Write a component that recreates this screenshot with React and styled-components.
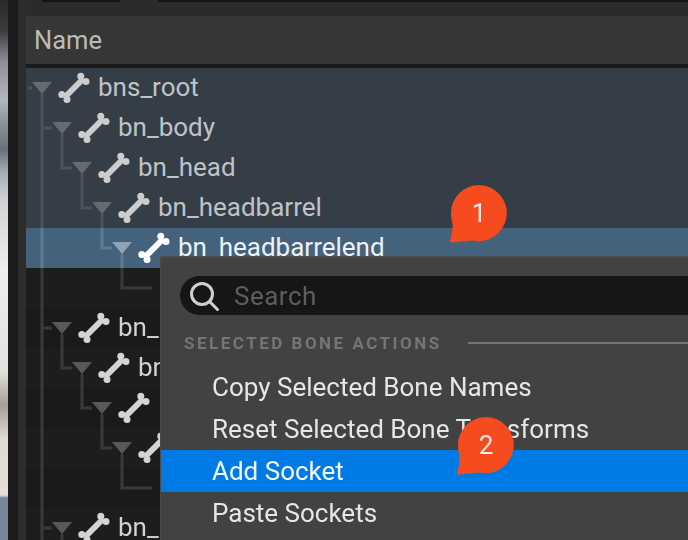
import React from 'react';
import styled, { createGlobalStyle } from 'styled-components';

const Global = createGlobalStyle`
  html, body { margin: 0; padding: 0; background: #1c1c1c; }
  body { width: 688px; height: 540px; overflow: hidden; font-family: Roboto, "Liberation Sans", sans-serif; }
`;

const Screen = styled.div`
  position: relative;
  display: flex;
  width: 688px;
  height: 540px;
  overflow: hidden;
  filter: blur(0.55px);
`;

const Backdrop = styled.div`
  flex: 0 0 8px;
  background: linear-gradient(
    to bottom,
    #2a2a2a 0, #3a3b3d 30px, #8d9097 62px, #b3b6bd 100px, #8a9097 125px, #66717a 150px,
    #a6adb4 172px, #d0d3d6 200px, #eeeeec 270px, #e4e2df 370px, #a89f96 405px, #dfdcd6 440px,
    #e3dfd8 495px, #77869b 498px, #77869b 540px
  );
`;

const Gutter = styled.div`
  flex: 0 0 ${(p) => p.$w}px;
  background: ${(p) => p.$bg};
`;

const Panel = styled.div`
  flex: 1;
  min-width: 0;
  display: flex;
  flex-direction: column;
  position: relative;
`;

const TabStrip = styled.div`
  flex: 0 0 16px;
  display: flex;
  gap: 38px;
  padding-left: 16px;
  background: #2b2b2b;
`;

const TabEdge = styled.div`
  height: 2px;
  width: ${(p) => p.$w}px;
  background: #141414;
`;

const Header = styled.div`
  flex: 0 0 48px;
  display: flex;
  align-items: center;
  padding-left: 8px;
  background: #363636;
  border-bottom: 4px solid #1a1a1a;
  color: #bcbcbc;
  font-size: 25.5px;
`;

const Tree = styled.div`
  position: relative;
  flex: 1;
`;

const ROW_BG = {
  parent: '#353d47',
  selected: '#44627c',
  even: '#1d1d1d',
  odd: '#1a1a1a',
};

// rows below the selection run under the context menu, so they stop at its left edge
const Row = styled.div`
  height: 40px;
  box-sizing: border-box;
  width: ${(p) => (p.$underMenu ? '134px' : 'auto')};
  overflow: hidden;
  display: flex;
  align-items: center;
  padding-left: ${(p) => 6 + p.$depth * 20}px;
  background: ${(p) => ROW_BG[p.$kind]};
  color: ${(p) => (p.$kind === 'selected' ? '#eef2f5' : p.$kind === 'parent' ? '#bfc3c7' : '#d2d2d2')};
  font-size: 26px;
  white-space: nowrap;
`;

const RowLabel = styled.span`
  margin-bottom: 3px;
`;

const Arrow = styled.span`
  flex: 0 0 20px;
  height: 12px;
  clip-path: polygon(0 0, 100% 0, 50% 100%);
  background: ${(p) => {
    if (p.$kind === 'selected') return '#8fa3b3';
    return p.$kind === 'parent' ? '#666a6f' : '#585858';
  }};
`;

const BoneSlot = styled.span`
  flex: 0 0 32px;
  height: 32px;
  margin: 0 8px 0 6px;
  color: ${(p) => (p.$kind === 'selected' ? '#ffffff' : p.$kind === 'parent' ? '#cdcdcd' : '#d4d4d4')};
`;

const Guides = styled.svg`
  position: absolute;
  left: 0;
  top: 0;
  pointer-events: none;
`;

const Menu = styled.div`
  position: absolute;
  left: 134px;
  top: 188px;
  width: 540px;
  height: 300px;
  background: #424242;
  border-top: 2px solid #4c4c4c;
  border-left: 1px solid #4a4a4a;
  box-sizing: border-box;
  padding-top: 18px;
`;

const SearchBox = styled.div`
  margin-left: 19px;
  height: 39px;
  display: flex;
  align-items: center;
  gap: 14px;
  padding-left: 8px;
  background: #161616;
  border-radius: 20px 0 0 20px;
  color: #5e5e5e;
  font-size: 26px;
  letter-spacing: 0.5px;
`;

const SectionHead = styled.div`
  display: flex;
  align-items: center;
  gap: 26px;
  height: 28px;
  margin: 14px 0 9px 23px;
  color: #757575;
  font-size: 17px;
  font-weight: 700;
  letter-spacing: 2.5px;
  white-space: nowrap;
`;

const SectionRule = styled.div`
  flex: 1;
  height: 2px;
  background: #767676;
`;

const Item = styled.div`
  height: 42px;
  display: flex;
  align-items: center;
  padding-left: 51px;
  background: ${(p) => (p.$active ? '#007be6' : 'transparent')};
  color: ${(p) => (p.$active ? '#f2f8fe' : '#e6e6e6')};
  font-size: 26px;
  white-space: nowrap;
`;

const Badge = styled.svg`
  position: absolute;
  left: ${(p) => p.$x}px;
  top: ${(p) => p.$y}px;
`;

const Bone = () => (
  <svg width="32" height="32" viewBox="0 0 32 32" fill="currentColor">
    <path d="M7 25 25 7" stroke="currentColor" strokeWidth="6" />
    <circle cx="22.8" cy="4.2" r="3.5" />
    <circle cx="28" cy="9.4" r="3.5" />
    <circle cx="3.8" cy="22.4" r="3.5" />
    <circle cx="9" cy="27.6" r="3.5" />
  </svg>
);

const SearchIcon = () => (
  <svg width="32" height="32" viewBox="0 0 32 32" fill="none" stroke="#d0d0d0" strokeWidth="3" strokeLinecap="round">
    <circle cx="14" cy="14" r="10.5" />
    <path d="m22 22 7.5 7.5" />
  </svg>
);

const CalloutMark = ({ x, y, n }) => (
  <Badge $x={x} $y={y} width="62" height="62" viewBox="0 0 62 62">
    <path
      d="M31 2a28 28 0 1 1-6 55.4C18 58 10 58.6 4.5 59.6 2.6 60 1.4 58.6 2.2 57 4 53 4.8 44 4.6 41 3.6 38 3 34 3 30A28 28 0 0 1 31 2Z"
      fill="#f64a1f"
    />
    <text x="31" y="39" textAnchor="middle" fill="#fbeee8" fontSize="26" fontFamily="Roboto, sans-serif">{n}</text>
  </Badge>
);

const rows = [
  { depth: 0, name: 'bns_root', kind: 'parent' },
  { depth: 1, name: 'bn_body', kind: 'parent' },
  { depth: 2, name: 'bn_head', kind: 'parent' },
  { depth: 3, name: 'bn_headbarrel', kind: 'parent' },
  { depth: 4, name: 'bn_headbarrelend', kind: 'selected' },
  { depth: 5, kind: 'even', leaf: true },
  { depth: 1, name: 'bn_', kind: 'odd' },
  { depth: 2, name: 'bn', kind: 'even' },
  { depth: 3, kind: 'odd' },
  { depth: 4, kind: 'even' },
  { depth: 5, kind: 'odd', leaf: true },
  { depth: 1, name: 'bn_', kind: 'even' },
];

// tree connector lines, in tree coordinates (row 0 starts at y=0, x=0 is the panel edge)
const upper = ['M16 26V160', 'M2 20H6', 'M16 60H26', 'M36 66V100H46', 'M56 106V140H66', 'M76 146V160'];
const selectedLines = ['M16 160V200', 'M76 160V180H86', 'M96 186V200'];
const lower = [
  'M16 200V472',
  'M96 200V220H126',
  'M16 260H26',
  'M36 266V300H46',
  'M56 306V340H66',
  'M76 346V380H86',
  'M96 386V420H126',
  'M16 460H26',
  'M36 466V472',
];

const menuItems = ['Copy Selected Bone Names', 'Reset Selected Bone Transforms', 'Add Socket', 'Paste Sockets'];

export default function App() {
  return (
    <>
      <Global />
      <Screen>
        <Backdrop />
        <Gutter $w={10} $bg="#1c1c1c" />
        <Gutter $w={8} $bg="#2c2c2c" />
        <Panel>
          <TabStrip>
            <TabEdge $w={78} />
            <TabEdge $w={530} />
          </TabStrip>
          <Header>Name</Header>
          <Tree>
            {rows.map((r, i) => (
              <Row key={i} $depth={r.depth} $kind={r.kind} $underMenu={i > 4}>
                {!r.leaf && <Arrow $kind={r.kind} />}
                {!r.leaf && <BoneSlot $kind={r.kind}><Bone /></BoneSlot>}
                {r.name && <RowLabel>{r.name}</RowLabel>}
              </Row>
            ))}
            <Guides width="662" height="472" fill="none" strokeWidth="3">
              <path d={upper.join('')} stroke="#4b545e" />
              <path d={selectedLines.join('')} stroke="#5f7b92" />
              <path d={lower.join('')} stroke="#3a3a3a" />
            </Guides>
            <Menu>
              <SearchBox><SearchIcon />Search</SearchBox>
              <SectionHead>SELECTED BONE ACTIONS<SectionRule /></SectionHead>
              {menuItems.map((m) => (
                <Item key={m} $active={m === 'Add Socket'}>{m}</Item>
              ))}
            </Menu>
          </Tree>
          <CalloutMark x={422} y={183} n="1" />
          <CalloutMark x={429} y={415} n="2" />
        </Panel>
      </Screen>
    </>
  );
}
